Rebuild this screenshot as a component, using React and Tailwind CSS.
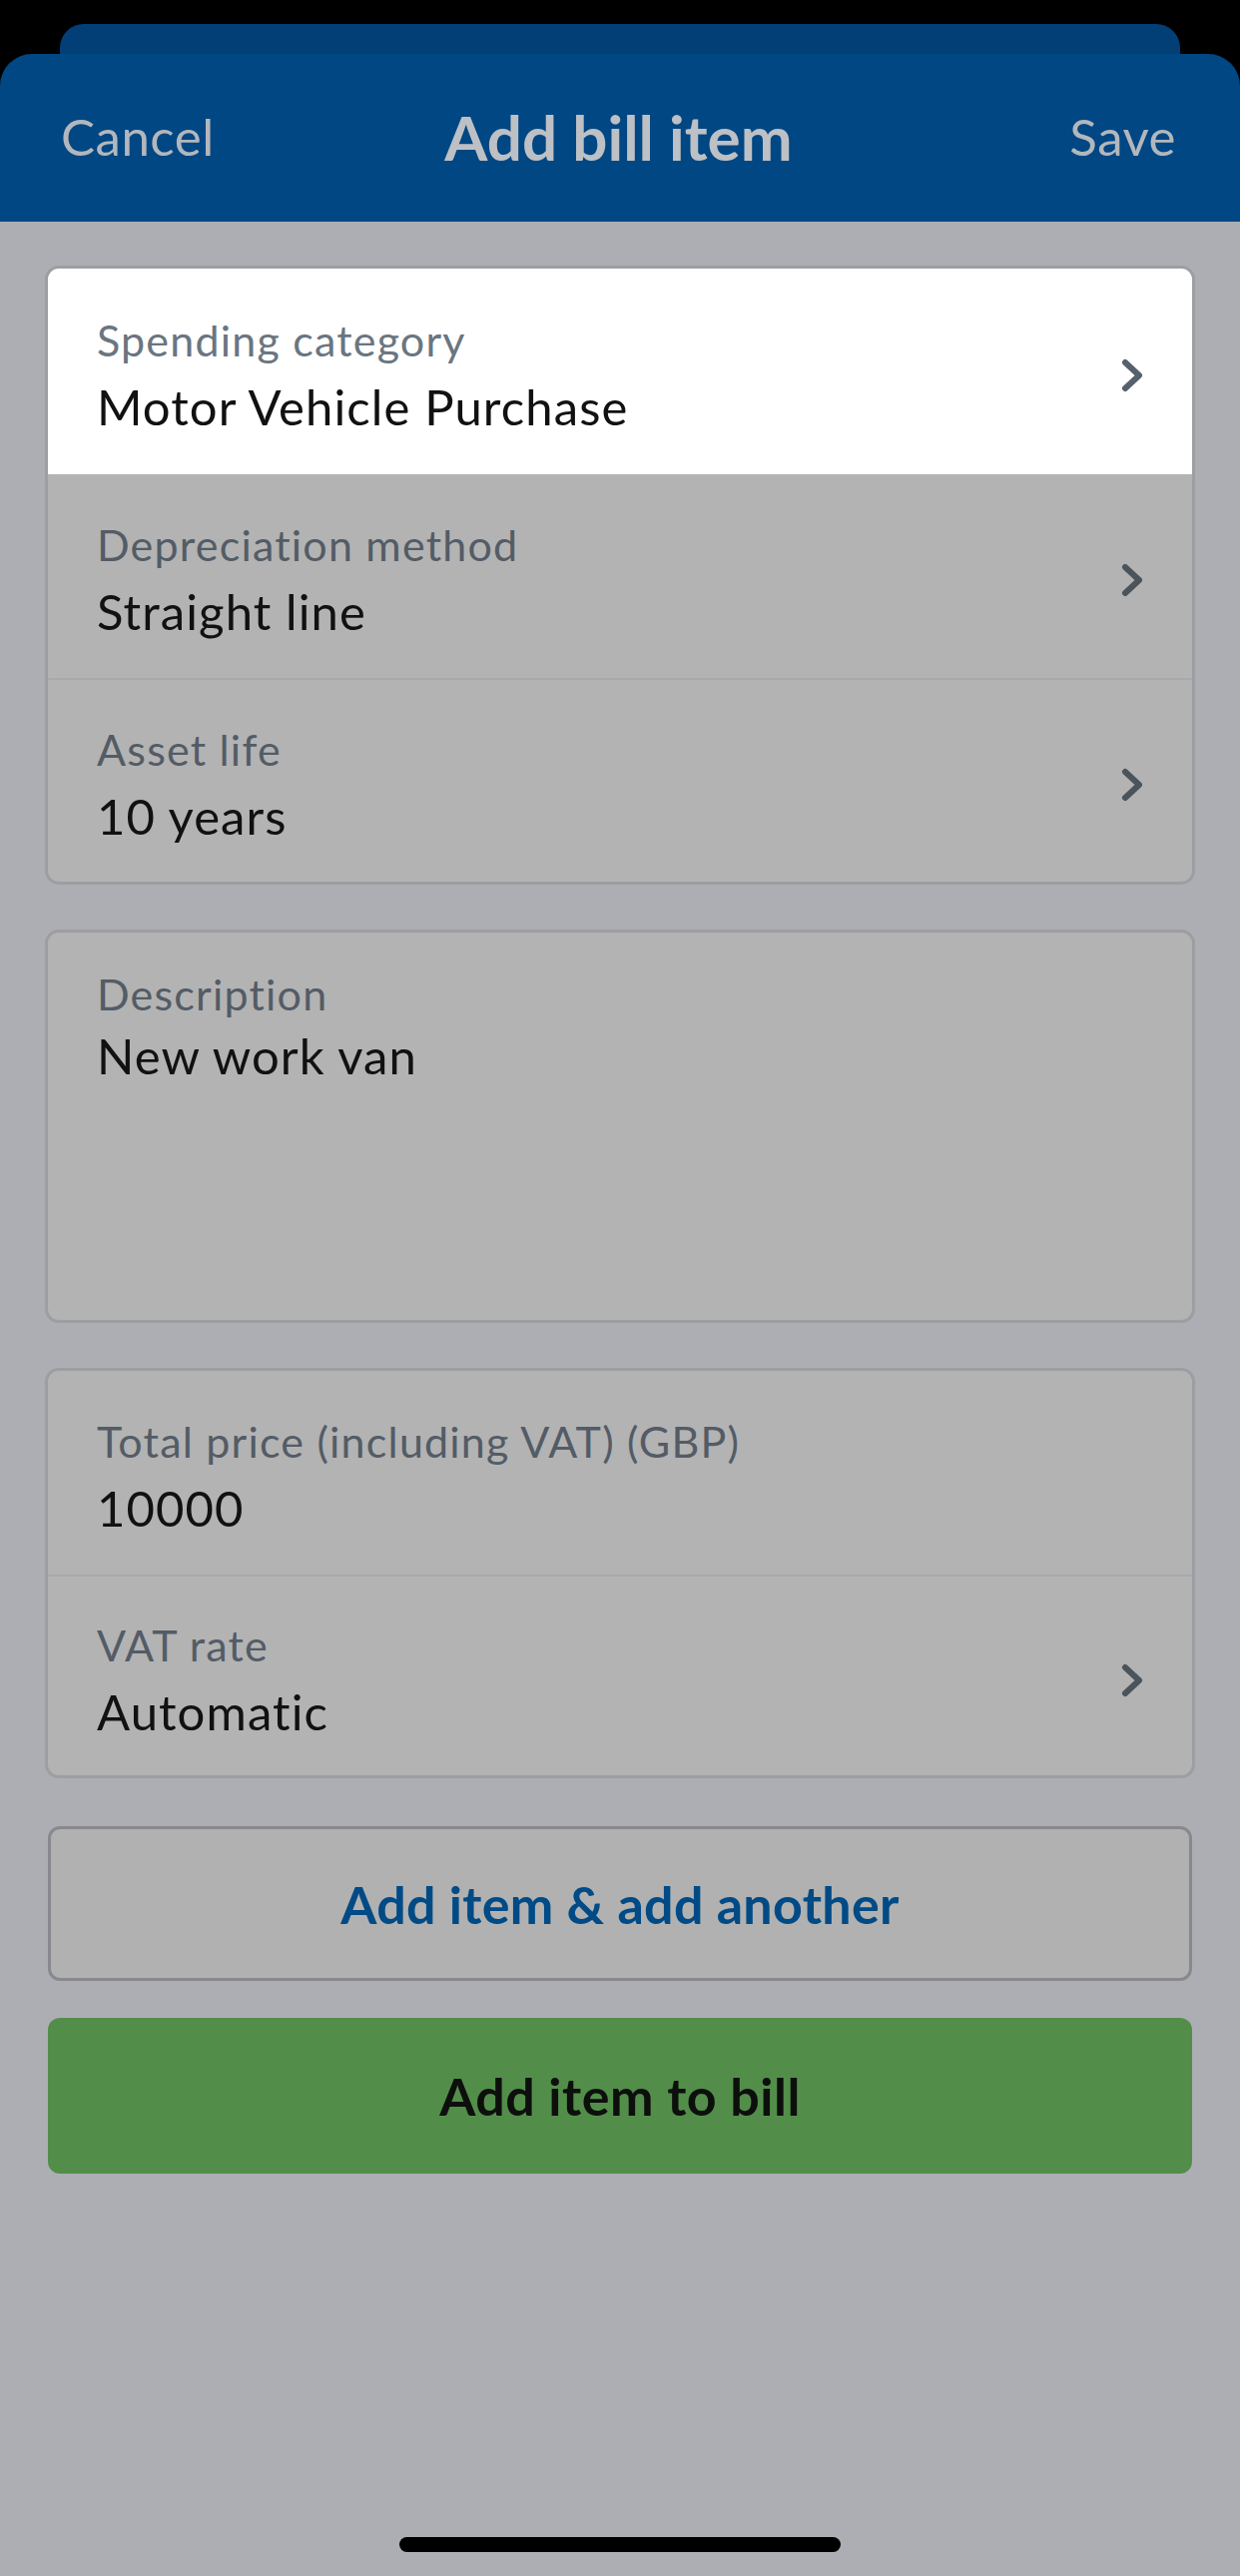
import React from "react";

const font = { fontFamily: "Lato, 'Noto Sans', sans-serif" };

function Chevron({ color }) {
  return (
    <svg width="22" height="34" viewBox="0 0 22 34" className="shrink-0">
      <path d="M4 4 L18 17 L4 30" fill="none" stroke={color} strokeWidth="6" strokeLinecap="round" strokeLinejoin="round" />
    </svg>
  );
}

function Row({ label, value, chevron = true, white = false, divider = false, h = "h-[204px]" }) {
  return (
    <div
      className={`flex ${h} items-center justify-between pl-[49px] pr-[49px] pt-[8px] ${white ? "bg-white" : ""} ${divider ? "border-t-2 border-[#a9a9ad]" : ""}`}
    >
      <div className="flex flex-col">
        <div className={`text-[43px] leading-[50px] tracking-[1.2px] ${white ? "text-[#6a7581]" : "text-[#535c66]"}`}>{label}</div>
        <div className="mt-[12px] text-[49px] leading-[58px] tracking-[1.1px] text-[#111111]">{value}</div>
      </div>
      {chevron && <Chevron color={white ? "#56616b" : "#4b535b"} />}
    </div>
  );
}

export default function App() {
  return (
    <div className="flex h-[2580px] w-[1242px] flex-col bg-[#adaeb3]" style={font}>
      <div className="bg-black pt-[24px]">
        <div className="mx-[60px] h-[30px] rounded-t-[24px] bg-[#013f76]" />
        <div className="flex h-[168px] items-center justify-between rounded-t-[32px] bg-[#004784] pl-[61px] pr-[64px] pb-[2px]">
          <span className="w-[220px] text-[51px] tracking-[0.5px] text-[#b3b7bc]">Cancel</span>
          <span className="text-[62px] font-bold text-[#bdc0c4]">Add bill item</span>
          <span className="w-[220px] text-right text-[51px] tracking-[0.5px] text-[#b3b7bc]">Save</span>
        </div>
      </div>

      <div className="mx-[45px] mt-[44px] overflow-hidden rounded-[14px] border-[3px] border-[#9d9ea2] bg-[#b3b3b3]">
        <Row label="Spending category" value="Motor Vehicle Purchase" white h="h-[206px]" />
        <Row label="Depreciation method" value="Straight line" />
        <Row label="Asset life" value="10 years" divider />
      </div>

      <div className="mx-[45px] mt-[45px] h-[394px] rounded-[14px] border-[3px] border-[#9d9ea2] bg-[#b3b3b3] pl-[49px] pt-[37px]">
        <div className="text-[43px] leading-[50px] tracking-[1.2px] text-[#535c66]">Description</div>
        <div className="mt-[7px] text-[49px] leading-[58px] tracking-[1.1px] text-[#111111]">New work van</div>
      </div>

      <div className="mx-[45px] mt-[45px] overflow-hidden rounded-[14px] border-[3px] border-[#9d9ea2] bg-[#b3b3b3]">
        <Row label="Total price (including VAT) (GBP)" value="10000" chevron={false} />
        <Row label="VAT rate" value="Automatic" divider h="h-[201px]" />
      </div>

      <button className="mx-[48px] mt-[48px] flex h-[155px] items-center justify-center rounded-[12px] border-[3px] border-[#88898e] bg-[#b1b1b1] text-[52px] font-bold tracking-[0.3px] text-[#004a86]">
        Add item &amp; add another
      </button>

      <button className="mx-[48px] mt-[37px] flex h-[156px] items-center justify-center rounded-[12px] bg-[#528e4a] text-[52px] font-bold tracking-[0.5px] text-[#0d0f0d]">
        Add item to bill
      </button>

      <div className="flex-1" />
      <div className="mb-[24px] flex justify-center">
        <div className="h-[15px] w-[442px] rounded-full bg-black" />
      </div>
    </div>
  );
}
